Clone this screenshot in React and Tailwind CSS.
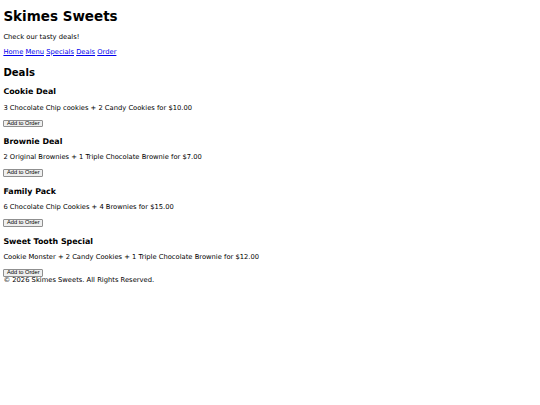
const deals = [
  { name: "Cookie Deal", text: "3 Chocolate Chip cookies + 2 Candy Cookies for $10.00" },
  { name: "Brownie Deal", text: "2 Original Brownies + 1 Triple Chocolate Brownie for $7.00" },
  { name: "Family Pack", text: "6 Chocolate Chip Cookies + 4 Brownies for $15.00" },
  { name: "Sweet Tooth Special", text: "Cookie Monster + 2 Candy Cookies + 1 Triple Chocolate Brownie for $12.00" },
];

const links = ["Home", "Menu", "Specials", "Deals", "Order"];

export default function App() {
  return (
    <div className="px-[3.375px] pt-[9.4px] font-['DejaVu_Sans',sans-serif] text-[6.75px] leading-[1.164] text-black bg-white min-h-[405px] antialiased">
      <header>
        <h1 className="text-[13.5px] font-bold leading-[1.164] mb-[9.05px]">Skimes Sweets</h1>
        <p className="mb-[6.75px]">Check our tasty deals!</p>
        <nav>
          {links.map((l, i) => (
            <span key={l}>
              <a href="#" className="text-[#0000ee] underline">{l}</a>
              {i < links.length - 1 ? " " : ""}
            </span>
          ))}
        </nav>
      </header>

      <main>
        <h2 className="text-[10.125px] font-bold leading-[1.164] mt-[10.5px] mb-[8.6px]">Deals</h2>
        {deals.map((d, i) => (
          <section key={d.name} className={i === 0 ? "" : "mt-[9.5px]"}>
            <h3 className="text-[7.9px] font-bold leading-[1.164] mb-[7.9px]">{d.name}</h3>
            <p className="mb-[7.2px]">{d.text}</p>
            <div className="h-[8.2px]">
              <button className="inline-flex items-center h-[7.8px] font-['Liberation_Sans',Arial,sans-serif] text-[5.7px] leading-none px-[2.6px] bg-[#efefef] border-[0.5px] border-[#8f8f8f] rounded-[1px] text-black">
                Add to Order
              </button>
            </div>
          </section>
        ))}
      </main>

      <footer>&copy; 2026 Skimes Sweets. All Rights Reserved.</footer>
    </div>
  );
}
